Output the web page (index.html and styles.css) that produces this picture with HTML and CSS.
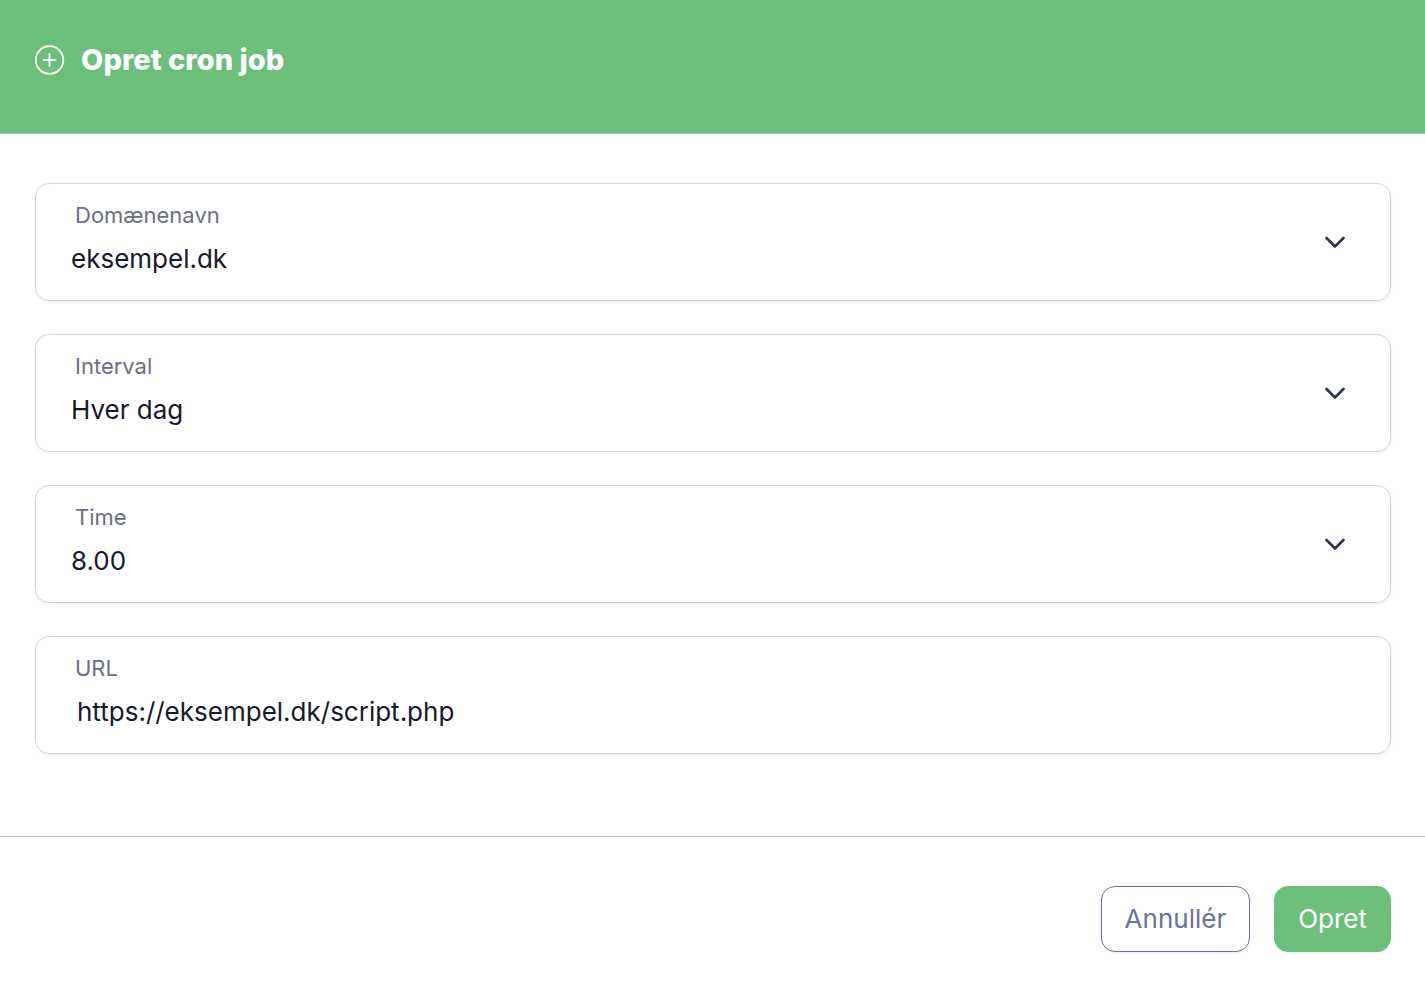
FILE: index.html
```html
<!DOCTYPE html>
<html lang="da">

<head>
    <meta charset="UTF-8">
    <meta name="viewport" content="width=device-width, initial-scale=1.0">
    <title>Opret cron job</title>
    <link rel="stylesheet" href="styles.css">
</head>

<body>
    <form class="dialog">
        <header class="header">
            <svg class="plus" viewBox="0 0 30 30" aria-hidden="true">
                <circle cx="14.5" cy="15" r="13.8" />
                <path d="M14.5 9v12M8.5 15h12" />
            </svg>
            <h1>Opret cron job</h1>
        </header>
        <main class="fields">
            <div class="field">
                <label for="domain">Domænenavn</label>
                <select id="domain">
                    <option>eksempel.dk</option>
                </select>
                <svg class="arrow" viewBox="0 0 20 12" aria-hidden="true">
                    <path d="M1.5 2L10 10.5 18.5 2" />
                </svg>
            </div>
            <div class="field">
                <label for="interval">Interval</label>
                <select id="interval">
                    <option>Hver dag</option>
                </select>
                <svg class="arrow" viewBox="0 0 20 12" aria-hidden="true">
                    <path d="M1.5 2L10 10.5 18.5 2" />
                </svg>
            </div>
            <div class="field">
                <label for="time">Time</label>
                <select id="time">
                    <option>8.00</option>
                </select>
                <svg class="arrow" viewBox="0 0 20 12" aria-hidden="true">
                    <path d="M1.5 2L10 10.5 18.5 2" />
                </svg>
            </div>
            <div class="field">
                <label for="url">URL</label>
                <input id="url" type="text" value="https://eksempel.dk/script.php" spellcheck="false">
            </div>
        </main>
        <footer class="footer">
            <button type="button" class="btn cancel">Annullér</button>
            <button type="submit" class="btn create">Opret</button>
        </footer>
    </form>
</body>

</html>
```

FILE: styles.css
```css
* {
    box-sizing: border-box;
}

body {
    margin: 0;
    background: #fff;
    color: #16182b;
    font-family: Inter, sans-serif;
}

.header {
    display: flex;
    align-items: center;
    gap: 16px;
    padding: 40px 35px 53px;
    border-bottom: 1px solid #a9b8b8;
    background: #6cbe7b;
    color: #fff;
}

.header h1 {
    margin: 0;
    font-size: 29px;
    line-height: 40px;
    font-weight: 800;
}

.plus {
    width: 30px;
    height: 30px;
    fill: none;
    stroke: #fff;
    stroke-width: 1.8;
    stroke-linecap: round;
}

.fields {
    display: flex;
    flex-direction: column;
    gap: 33px;
    padding: 49px 34px 82px 35px;
}

.field {
    position: relative;
    height: 118px;
    border: 1px solid #cbd5e1;
    border-radius: 14px;
    box-shadow: 0 1px 3px rgba(0, 0, 0, 0.08);
}

.field label {
    position: absolute;
    left: 39px;
    top: 16px;
    font-size: 22px;
    line-height: 30px;
    color: #6b6f7e;
    pointer-events: none;
}

.field select,
.field input {
    appearance: none;
    display: block;
    width: 100%;
    height: 100%;
    margin: 0;
    padding: 55px 80px 21px 35px;
    border: 0;
    border-radius: 14px;
    background: transparent;
    color: inherit;
    font-family: inherit;
    font-size: 26px;
    line-height: 40px;
}

.field input {
    padding: 54px 41px 22px;
}

.arrow {
    position: absolute;
    right: 45px;
    top: 52px;
    width: 20px;
    height: 12px;
    fill: none;
    stroke: #2d3348;
    stroke-width: 2.6;
    stroke-linecap: round;
    stroke-linejoin: round;
    pointer-events: none;
}

.footer {
    display: flex;
    justify-content: flex-end;
    gap: 24px;
    padding: 49px 34px 33px;
    border-top: 1px solid #a5b4c8;
}

.btn {
    height: 66px;
    padding: 0 23px 2px;
    border: 1px solid #64749a;
    border-radius: 14px;
    background: #fff;
    color: #64749a;
    font-family: inherit;
    font-size: 26px;
    box-shadow: 0 1px 3px rgba(0, 0, 0, 0.08);
    cursor: pointer;
}

.create {
    border-color: #6cbe7b;
    background: #6cbe7b;
    color: #fff;
}
```
